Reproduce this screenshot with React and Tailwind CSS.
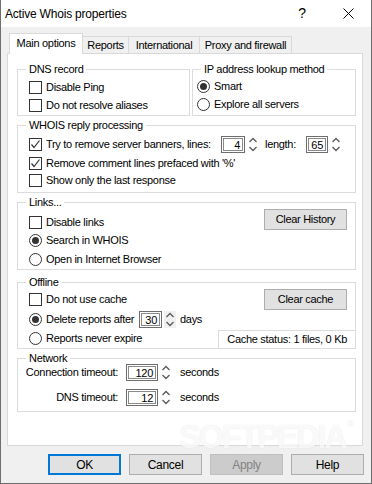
import React from 'react';

const Check = ({ checked }) => (
  <span className="w-[13px] h-[13px] border border-[#333333] bg-white flex items-center justify-center shrink-0">
    {checked && (
      <svg width="11" height="11" viewBox="0 0 11 11">
        <polyline points="1.5,5.5 4,8.5 9.5,1.5" fill="none" stroke="#333333" strokeWidth="1.2" />
      </svg>
    )}
  </span>
);

const Radio = ({ checked }) => (
  <span className="w-[13px] h-[13px] rounded-full border border-[#333333] bg-white flex items-center justify-center shrink-0">
    {checked && <span className="w-[7px] h-[7px] rounded-full bg-[#333333]" />}
  </span>
);

const Spin = ({ className = '' }) => (
  <svg width="12" height="17" viewBox="0 0 12 17" className={`shrink-0 ${className}`}>
    <polyline points="2.5,6 6,2.5 9.5,6" fill="none" stroke="#5a5a5a" strokeWidth="1.3" />
    <polyline points="2.5,11 6,14.5 9.5,11" fill="none" stroke="#5a5a5a" strokeWidth="1.3" />
  </svg>
);

const Edit = ({ value, className }) => (
  <div className={`h-[17px] border border-[#6e6e6e] p-[1px] bg-white shrink-0 ${className}`}>
    <div className="h-full border border-[#8a8a8a] text-right pr-[2px] leading-[12px]">{value}</div>
  </div>
);

const Legend = ({ children }) => (
  <div className="-mt-[8px] ml-[8px] px-[3px] bg-white w-fit h-[14px] leading-[14px] whitespace-nowrap">{children}</div>
);

const Option = ({ radio, checked, label, className = 'h-[18px]' }) => (
  <div className={`flex items-center gap-[4px] pl-[11px] whitespace-nowrap ${className}`}>
    {radio ? <Radio checked={checked} /> : <Check checked={checked} />}
    <span>{label}</span>
  </div>
);

const Btn = ({ children, className = '' }) => (
  <div className={`w-[73px] h-[21px] flex items-center justify-center whitespace-nowrap ${className}`}>{children}</div>
);

const Timeout = ({ label, value, className = '' }) => (
  <div className={`flex items-center h-[18px] pl-[8px] ${className}`}>
    <div className="w-[92px] flex justify-end whitespace-nowrap">{label}</div>
    <Edit value={value} className="w-[32px] ml-[8px]" />
    <Spin className="ml-[2px]" />
    <span className="ml-[8px]">seconds</span>
  </div>
);

export default function App() {
  return (
    <div className="w-[372px] h-[484px] bg-[#f0f0f0] border-x border-b border-[#6f6f6f] flex flex-col relative overflow-hidden font-['Liberation_Sans',Arial,sans-serif] text-[11px] tracking-[-0.3px] text-black">
      {/* title bar */}
      <div className="h-[27px] bg-white flex items-center shrink-0">
        <span className="pl-[4px] text-[12px] tracking-[-0.2px] flex-1">Active Whois properties</span>
        <span className="w-[46px] text-center text-[14px]">?</span>
        <span className="w-[46px] flex justify-center">
          <svg width="11" height="11" viewBox="0 0 11 11">
            <path d="M0.5 0.5 L10.5 10.5 M10.5 0.5 L0.5 10.5" stroke="#000" strokeWidth="1" />
          </svg>
        </span>
      </div>

      <div className="ml-[6px] w-[356px] mt-[6px]">
        {/* tabs */}
        <div className="flex items-end pl-[2px] h-[20px] whitespace-nowrap">
          <div className="w-[74px] h-[21px] -mb-[1px] relative z-10 bg-white border border-b-0 border-[#d9d9d9] flex items-center justify-center pb-[2px]">
            Main options
          </div>
          <div className="w-[46px] h-[17px] border border-l-0 border-b-0 border-[#d9d9d9] flex items-center justify-center">Reports</div>
          <div className="w-[71px] h-[17px] border border-l-0 border-b-0 border-[#d9d9d9] flex items-center justify-center">International</div>
          <div className="w-[92px] h-[17px] border border-l-0 border-b-0 border-[#d9d9d9] flex items-center justify-center">Proxy and firewall</div>
        </div>

        {/* page */}
        <div className="border border-[#d9d9d9] bg-white h-[393px] pl-[9px] pr-[6px] pt-[15px]">
          <div className="flex gap-[2px]">
            <div className="w-[173px] h-[47px] border border-[#dcdcdc]">
              <Legend>DNS record</Legend>
              <div className="mt-[2px]">
                <Option label="Disable Ping" />
                <Option label="Do not resolve aliases" />
              </div>
            </div>
            <div className="flex-1 h-[47px] border border-[#dcdcdc]">
              <Legend>IP address lookup method</Legend>
              <div className="mt-[1px] -ml-[7px]">
                <Option radio checked label="Smart" />
                <Option radio label="Explore all servers" />
              </div>
            </div>
          </div>

          <div className="mt-[9px] h-[68px] border border-[#dcdcdc]">
            <Legend>WHOIS reply processing</Legend>
            <div className="mt-[2px]">
              <div className="flex items-center pl-[11px] h-[20px] whitespace-nowrap">
                <Check checked />
                <span className="ml-[4px] w-[175px]">Try to remove server banners, lines:</span>
                <Edit value="4" className="w-[24px]" />
                <Spin className="ml-[2px]" />
                <span className="ml-[6px] w-[41px]">length:</span>
                <Edit value="65" className="w-[22px]" />
                <Spin className="ml-[2px]" />
              </div>
              <Option checked label="Remove comment lines prefaced with '%'" />
              <Option label="Show only the last response" className="h-[17px]" />
            </div>
          </div>

          <div className="mt-[9px] h-[68px] border border-[#dcdcdc] flex flex-col">
            <Legend>Links...</Legend>
            <div className="flex flex-1">
              <div className="flex-1 mt-[4px]">
                <Option label="Disable links" />
                <Option radio checked label="Search in WHOIS" />
                <Option radio label="Open in Internet Browser" className="h-[19px] mt-[1px]" />
              </div>
              <Btn className="w-[83px] mr-[8px] bg-[#e1e1e1] border border-[#adadad]">Clear History</Btn>
            </div>
          </div>

          <div className="mt-[12px] h-[67px] border border-[#dcdcdc] flex flex-col">
            <Legend>Offline</Legend>
            <div className="flex flex-1">
              <div className="flex-1 mt-[1px]">
                <Option label="Do not use cache" className="h-[19px]" />
                <div className="flex items-center pl-[11px] h-[20px] whitespace-nowrap">
                  <Radio checked />
                  <span className="ml-[4px] w-[93px]">Delete reports after</span>
                  <Edit value="30" className="w-[23px]" />
                  <Spin className="ml-[2px] bg-[#f0f0f0]" />
                  <span className="ml-[4px]">days</span>
                </div>
                <Option radio label="Reports never expire" />
              </div>
              <div className="flex flex-col justify-between items-end">
                <Btn className="w-[83px] mr-[8px] bg-[#e1e1e1] border border-[#adadad]">Clear cache</Btn>
                <div className="w-[137px] h-[18px] border-t border-l border-[#dcdcdc] flex items-center justify-end pr-[8px] whitespace-nowrap">
                  Cache status: 1 files, 0 Kb
                </div>
              </div>
            </div>
          </div>

          <div className="mt-[9px] h-[54px] border border-[#dcdcdc]">
            <Legend>Network</Legend>
            <div className="-mt-[2px]">
              <Timeout label="Connection timeout:" value="120" />
              <Timeout label="DNS timeout:" value="12" className="mt-[7px]" />
            </div>
          </div>
        </div>
      </div>

      {/* dialog buttons */}
      <div className="flex justify-end gap-[8px] mr-[7px] mt-[8px] text-[12px]">
        <Btn className="bg-[#e1e1e1] border-2 border-[#0078d7]">OK</Btn>
        <Btn className="bg-[#e1e1e1] border border-[#adadad]">Cancel</Btn>
        <Btn className="bg-[#cccccc] border border-[#bfbfbf] text-[#838383]">Apply</Btn>
        <Btn className="bg-[#e1e1e1] border border-[#adadad]">Help</Btn>
      </div>

      {/* watermark */}
      <div className="absolute left-[178px] top-[420px] text-[33px] font-bold tracking-[-2.5px] text-white/80 [text-shadow:0_0_1px_rgba(0,0,0,0.12)] pointer-events-none leading-none">
        SOFTPEDIA<span className="text-[9px] align-top ml-[2px]">®</span>
      </div>
    </div>
  );
}
